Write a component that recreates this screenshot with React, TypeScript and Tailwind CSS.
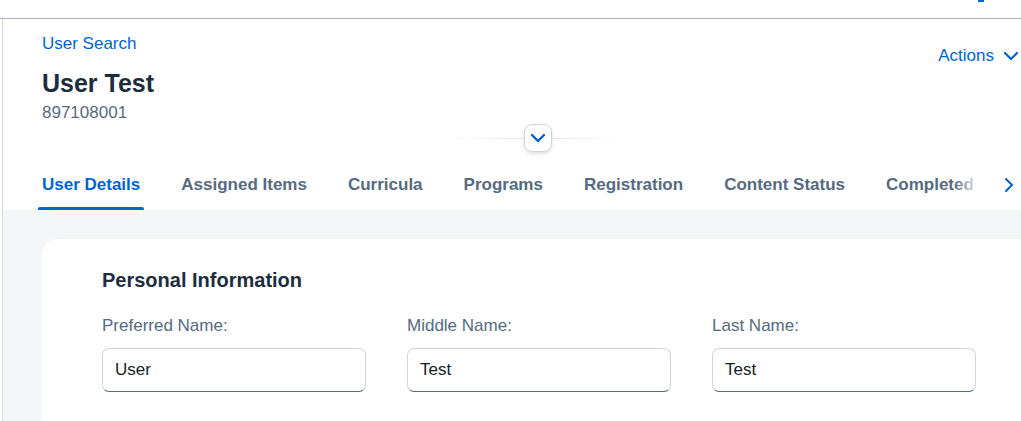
import React from "react";
import { ChevronDown, ChevronRight } from "lucide-react";

const tabs = [
  "User Details",
  "Assigned Items",
  "Curricula",
  "Programs",
  "Registration",
  "Content Status",
  "Completed",
];

function Field({ label, value }: { label: string; value: string }) {
  return (
    <div className="flex flex-col">
      <div className="text-[17px] leading-[20px] text-[#556b82]">{label}</div>
      <div className="mt-[12px] h-[44px] w-[264px] rounded-[7px] border border-[#cfd5dc] border-b-[#556b82] bg-white px-[12px] flex items-center text-[17px] text-[#131e29]">
        {value}
      </div>
    </div>
  );
}

export default function App() {
  return (
    <div
      className="w-[1021px] h-[421px] overflow-hidden bg-white flex flex-col"
      style={{ fontFamily: '"Liberation Sans", Arial, sans-serif' }}
    >
      {/* top strip */}
      <div className="h-[19px] shrink-0 border-b border-[#a9b3c6] flex justify-end">
        <div className="mr-[37px] h-[2px] w-[6px] bg-[#0064d9]" />
      </div>

      <div className="flex flex-1 min-h-0">
        {/* left edge */}
        <div className="w-[3px] shrink-0 border-r border-[#d5dae0] bg-white" />

        <div className="flex-1 flex flex-col min-w-0">
          {/* header */}
          <div className="flex justify-between items-start pl-[39px]">
            <div className="flex flex-col pt-[15px]">
              <div className="text-[17px] leading-[20px] text-[#0064d9]">User Search</div>
              <div className="mt-[14px] text-[25px] leading-[30px] font-bold text-[#1d2d3e]">
                User Test
              </div>
              <div className="mt-[5px] text-[17px] leading-[20px] text-[#556b82]">897108001</div>
            </div>
            <div className="mt-[25px] flex items-center gap-[5px] mr-[-2px]">
              <span className="text-[17px] leading-[20px] text-[#0064d9]">Actions</span>
              <ChevronDown size={24} strokeWidth={2.2} className="text-[#0064d9]" />
            </div>
          </div>

          {/* collapse button */}
          <div className="mt-[1px] h-[28px] flex items-center pl-[442px]">
            <div className="w-[79px] h-px bg-gradient-to-r from-transparent to-[#e5e7ea]" />
            <div className="w-[28px] h-[28px] rounded-[8px] border border-[#d2d7dd] bg-white shadow-[0_2px_4px_rgba(0,0,0,0.12)] flex items-center justify-center">
              <ChevronDown size={24} strokeWidth={2.4} className="text-[#0064d9]" />
            </div>
            <div className="w-[73px] h-px bg-gradient-to-r from-[#e5e7ea] to-transparent" />
          </div>

          {/* tabs */}
          <div className="mt-[6px] h-[52px] flex items-stretch pl-[35px]">
            <div className="relative flex-1 min-w-0 overflow-hidden flex gap-[33px]">
              {tabs.map((t, i) => (
                <div
                  key={t}
                  className={`relative shrink-0 px-[4px] flex items-center pt-[1px] text-[17px] font-bold whitespace-nowrap ${
                    i === 0 ? "text-[#0064d9]" : "text-[#556b82]"
                  }`}
                >
                  {t}
                  {i === 0 && (
                    <div className="absolute left-0 right-0 bottom-0 h-[3px] rounded-t-[2px] bg-[#0064d9]" />
                  )}
                </div>
              ))}
              <div className="absolute right-0 top-0 bottom-0 w-[26px] bg-gradient-to-r from-transparent to-white" />
            </div>
            <div className="w-[41px] shrink-0 flex items-center pl-[17px] pt-[1px]">
              <ChevronRight size={24} strokeWidth={2} className="text-[#0064d9]" />
            </div>
          </div>

          {/* content */}
          <div className="flex-1 bg-[#f5f6f7] pl-[39px] pt-[29px]">
            <div className="h-full bg-white rounded-tl-[16px] pl-[60px] pt-[29px]">
              <div className="text-[20px] leading-[24px] font-bold text-[#1d2d3e]">
                Personal Information
              </div>
              <div className="mt-[24px] flex gap-[41px]">
                <Field label="Preferred Name:" value="User" />
                <Field label="Middle Name:" value="Test" />
                <Field label="Last Name:" value="Test" />
              </div>
            </div>
          </div>
        </div>
      </div>
    </div>
  );
}
